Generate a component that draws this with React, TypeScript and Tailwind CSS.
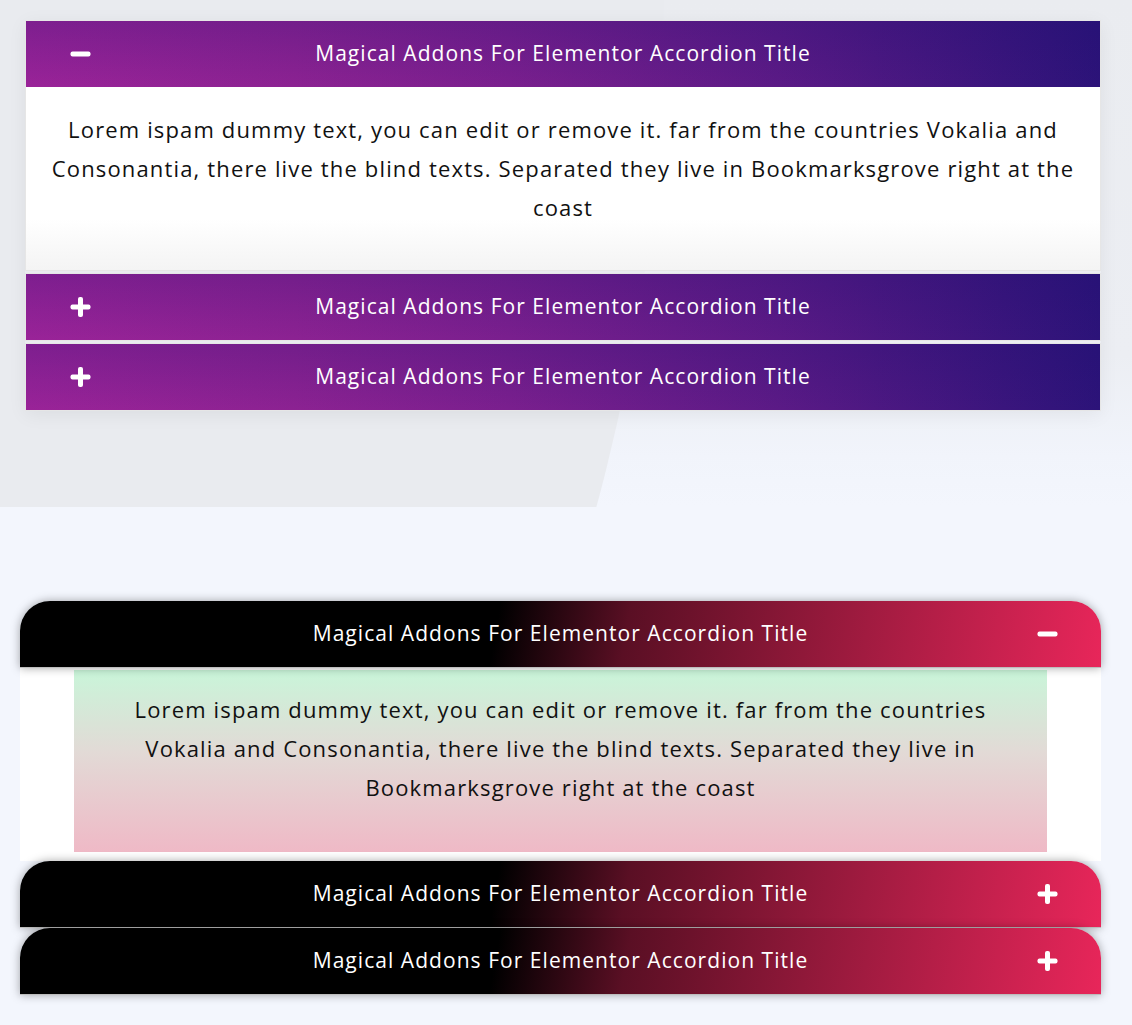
import React from "react";

const TITLE = "Magical Addons For Elementor Accordion Title";
const BODY =
  "Lorem ispam dummy text, you can edit or remove it. far from the countries Vokalia and Consonantia, there live the blind texts. Separated they live in Bookmarksgrove right at the coast";

function Minus() {
  return (
    <svg width="21" height="6" viewBox="0 0 21 6" className="block">
      <rect x="0.5" y="0.5" width="20" height="5" rx="2" fill="#fff" />
    </svg>
  );
}

function Plus() {
  return (
    <svg width="21" height="21" viewBox="0 0 21 21" className="block">
      <rect x="0.5" y="8" width="20" height="5" rx="2" fill="#fff" />
      <rect x="8" y="0.5" width="5" height="20" rx="2" fill="#fff" />
    </svg>
  );
}

const titleFont = { fontFamily: '"Open Sans", "Liberation Sans", sans-serif' };
const bodyFont = { fontFamily: '"Open Sans", "Liberation Sans", sans-serif' };

function PurpleItem({ open }: { open?: boolean }) {
  return (
    <div className="border border-[#e6e6e6] bg-white mb-[2px]">
      <div className="relative h-[66px] flex items-center justify-center bg-[linear-gradient(to_bottom,rgba(24,14,110,0.22),rgba(24,14,110,0)),linear-gradient(to_right,#9a2398_0%,#8c2292_25%,#7a1f8e_45%,#5b1a86_70%,#2c1379_100%)]">
        <div className="absolute left-[44px] top-1/2 -translate-y-1/2">{open ? <Minus /> : <Plus />}</div>
        <span className="text-white text-[21px] tracking-[1.05px]" style={titleFont}>
          {TITLE}
        </span>
      </div>
      {open && (
        <div className="bg-[linear-gradient(to_bottom,#ffffff_0%,#ffffff_72%,#f4f4f4_100%)] pt-[23px] pb-[43px] px-[20px] text-center text-[22px] tracking-[1.15px] leading-[39px] text-[#111]" style={bodyFont}>
          {BODY}
        </div>
      )}
    </div>
  );
}

function DarkHeader({ open }: { open?: boolean }) {
  return (
    <div className="relative z-10 h-[67px] rounded-t-[30px] flex items-center justify-center border-b border-[#bdbdbd] shadow-[0_0_10px_rgba(0,0,0,0.35)] bg-[linear-gradient(100deg,#000000_0%,#000000_44%,#5a0f24_56%,#a11b40_78%,#e8265a_100%)]">
      <span className="text-white text-[21px] tracking-[1.05px]" style={titleFont}>
        {TITLE}
      </span>
      <div className="absolute right-[43px] top-1/2 -translate-y-1/2">{open ? <Minus /> : <Plus />}</div>
    </div>
  );
}

export default function App() {
  return (
    <div className="relative min-h-[1025px] w-full overflow-hidden bg-[#f3f6fd]">
      <section className="relative h-[507px] overflow-hidden bg-[linear-gradient(to_bottom,#eaecf0_0%,#eceef3_70%,#f1f4fb_90%,#f3f6fd_100%)]">
        <div className="absolute left-[-3204px] top-[-1934px] w-[3868px] h-[3868px] rounded-full bg-[#e9ebef]" />
        <div className="relative pt-[20px] pl-[25px] w-[1101px]">
          <div className="shadow-[0_4px_18px_rgba(0,0,0,0.06)]">
            <PurpleItem open />
            <PurpleItem />
            <PurpleItem />
          </div>
        </div>
      </section>

      <section className="relative pt-[94px] pl-[20px] w-[1101px]">
        <div>
          <DarkHeader open />
          <div className="bg-white px-[54px] pt-[2px] pb-[9px]">
            <div className="bg-[linear-gradient(to_bottom,#c9f5d9_0%,#e2dad6_45%,#efb9c6_100%)] pt-[20px] pb-[45px] px-[40px] text-center text-[22px] tracking-[1.15px] leading-[39px] text-[#111]" style={bodyFont}>
              {BODY}
            </div>
          </div>
          <DarkHeader />
          <DarkHeader />
        </div>
      </section>
    </div>
  );
}
